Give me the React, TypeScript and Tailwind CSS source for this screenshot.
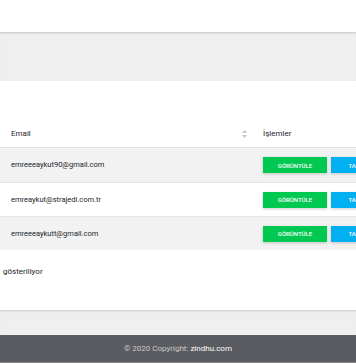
import React from 'react';

const rows = ['emreeeaykut90@gmail.com', 'emreaykut@strajedi.com.tr', 'emreeeaykutt@gmail.com'];

export default function App() {
  return (
    <div className="w-[356px] h-[364px] overflow-hidden bg-white font-['Roboto',sans-serif] text-[#212529]">
      <div className="h-[32px] bg-white" />
      <div className="h-[49px] bg-[#efefef] border-t border-[#d4d4d4] shadow-[inset_0_1px_1px_rgba(0,0,0,0.08)]" />

      <div className="pt-[39px]">
        <div className="flex h-[28px] items-center border-b border-[#dee2e6] text-[8px]">
          <div className="flex w-[255px] shrink-0 items-center justify-between pl-[11px] pr-[8px]">
            <span>Email</span>
            <svg width="5" height="8" viewBox="0 0 5 8" className="text-[#c4c4c4]">
              <path d="M2.5 0 L5 3 H0 Z" fill="currentColor" />
              <path d="M2.5 8 L5 5 H0 Z" fill="currentColor" />
            </svg>
          </div>
          <div className="pl-[8px]">İşlemler</div>
        </div>

        {rows.map((email, i) => (
          <div
            key={email}
            className={`flex h-[34px] items-center text-[7.5px] ${i % 2 === 0 ? 'bg-[#f2f2f2]' : 'bg-white'} ${i > 0 ? 'border-t border-[#e6e6e6]' : ''}`}
          >
            <div className="w-[255px] shrink-0 pl-[11px]">{email}</div>
            <div className="flex shrink-0 gap-[4px] pl-[8px]">
              <span className="flex h-[16px] w-[64px] items-center justify-center bg-[#00c851] text-[6px] font-medium text-white shadow-[0_1px_3px_rgba(0,0,0,0.2)]">
                GÖRÜNTÜLE
              </span>
              <span className="flex h-[16px] w-[64px] items-center justify-center bg-[#00b0f0] text-[6px] font-medium text-white shadow-[0_1px_3px_rgba(0,0,0,0.2)]">
                TAMAMLA
              </span>
            </div>
          </div>
        ))}

        <div className="pl-[3px] pt-[16px] text-[8px]">gösteriliyor</div>
      </div>

      <div className="mt-[32px] h-[25px] bg-[#efefef] border-t border-[#d4d4d4] shadow-[inset_0_1px_1px_rgba(0,0,0,0.06)]" />
      <div className="flex h-[28px] items-center justify-center bg-[#5b5c61] text-[8px] text-[#c8c8c8] border-b border-[#888]">
        © 2020 Copyright:&nbsp;<span className="text-white">zindhu.com</span>
      </div>
    </div>
  );
}
